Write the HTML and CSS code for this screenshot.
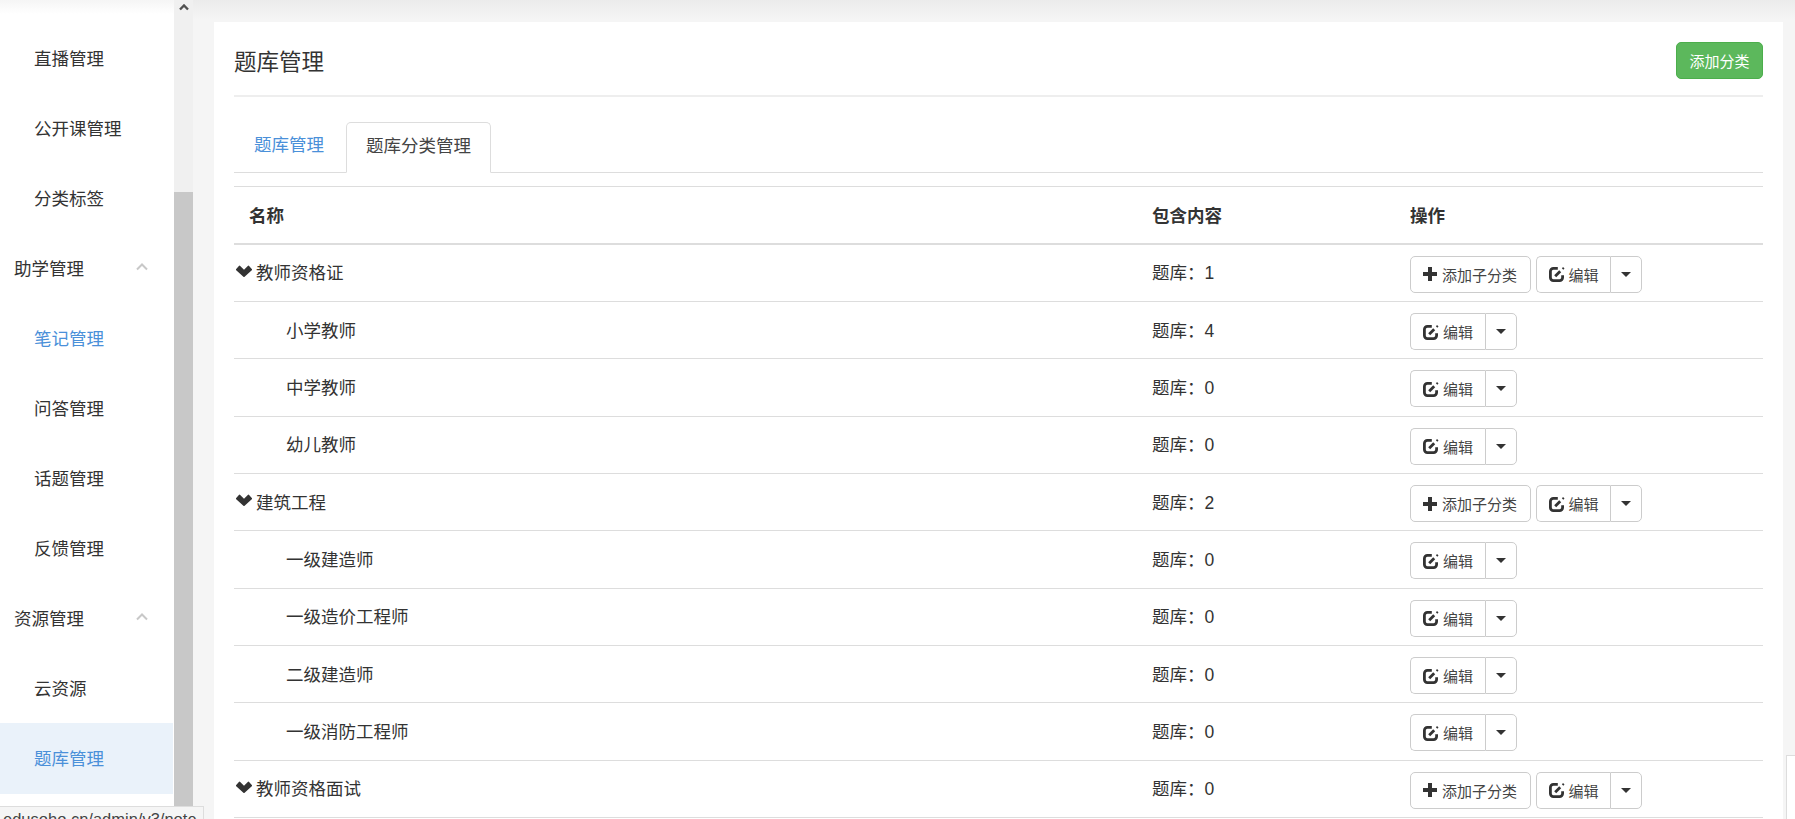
FILE: index.html
```html
<!DOCTYPE html>
<html lang="zh-CN">
<head>
<meta charset="utf-8">
<title>题库管理</title>
<link rel="stylesheet" href="styles.css">
</head>
<body>
<svg class="defs" width="0" height="0" aria-hidden="true">
  <symbol id="i-chev" viewBox="0 0 16 12"><path d="M.2 3.9 2.9.9a.9.9 0 0 1 1.3 0L8 4.7 11.8.9a.9.9 0 0 1 1.3 0l2.7 3a.9.9 0 0 1 0 1.3L8.6 11.7a.9.9 0 0 1-1.2 0L.2 5.2a.9.9 0 0 1 0-1.3z"/></symbol>
  <symbol id="i-plus" viewBox="0 0 14 14"><path d="M5 0h4v5h5v4H9v5H5V9H0V5h5z"/></symbol>
  <symbol id="i-edit" viewBox="0 0 16 16"><path class="stroke" d="M13.6 9.2v2.4a3 3 0 0 1-3 3H4.4a3 3 0 0 1-3-3V5.4a3 3 0 0 1 3-3h4.4"/><path class="stroke" d="M6.2 10.2 11.2 5.2"/><path class="stroke thin" d="M13.6 3l1.2-1.2"/></symbol>
</svg>
<div class="app">
  <aside class="side">
    <nav class="nav">
      <a class="item sub">直播管理</a>
      <a class="item sub">公开课管理</a>
      <a class="item sub">分类标签</a>
      <a class="item group">助学管理<svg class="up" viewBox="0 0 12 8"><path d="M1 6.5 6 1.5l5 5"/></svg></a>
      <a class="item sub link">笔记管理</a>
      <a class="item sub">问答管理</a>
      <a class="item sub">话题管理</a>
      <a class="item sub">反馈管理</a>
      <a class="item group">资源管理<svg class="up" viewBox="0 0 12 8"><path d="M1 6.5 6 1.5l5 5"/></svg></a>
      <a class="item sub">云资源</a>
      <a class="item sub link on">题库管理</a>
    </nav>
  </aside>
  <div class="scrollbar">
    <div class="track"><svg class="sb-arrow" viewBox="0 0 10 7"><path d="M1 5.5 5 1.5l4 4"/></svg></div>
    <div class="thumb"></div>
  </div>
  <main class="main">
    <section class="card">
      <header class="head">
        <h1 class="title">题库管理</h1>
        <button class="add">添加分类</button>
      </header>
      <ul class="tabs">
        <li class="tab link">题库管理</li>
        <li class="tab active">题库分类管理</li>
      </ul>
      <div class="table">
        <div class="row th"><div class="c-name">名称</div><div>包含内容</div><div>操作</div></div>

        <div class="row"><div class="name"><svg class="chev"><use href="#i-chev"/></svg>教师资格证</div><div class="count">题库：1</div><div class="ops"><button class="btn add-child"><svg class="plus"><use href="#i-plus"/></svg>添加子分类</button><span class="split"><button class="btn"><svg class="edit"><use href="#i-edit"/></svg>编辑</button><button class="btn drop"><i class="caret"></i></button></span></div></div>
        <div class="row"><div class="name child">小学教师</div><div class="count">题库：4</div><div class="ops"><span class="split"><button class="btn"><svg class="edit"><use href="#i-edit"/></svg>编辑</button><button class="btn drop"><i class="caret"></i></button></span></div></div>
        <div class="row"><div class="name child">中学教师</div><div class="count">题库：0</div><div class="ops"><span class="split"><button class="btn"><svg class="edit"><use href="#i-edit"/></svg>编辑</button><button class="btn drop"><i class="caret"></i></button></span></div></div>
        <div class="row"><div class="name child">幼儿教师</div><div class="count">题库：0</div><div class="ops"><span class="split"><button class="btn"><svg class="edit"><use href="#i-edit"/></svg>编辑</button><button class="btn drop"><i class="caret"></i></button></span></div></div>
        <div class="row"><div class="name"><svg class="chev"><use href="#i-chev"/></svg>建筑工程</div><div class="count">题库：2</div><div class="ops"><button class="btn add-child"><svg class="plus"><use href="#i-plus"/></svg>添加子分类</button><span class="split"><button class="btn"><svg class="edit"><use href="#i-edit"/></svg>编辑</button><button class="btn drop"><i class="caret"></i></button></span></div></div>
        <div class="row"><div class="name child">一级建造师</div><div class="count">题库：0</div><div class="ops"><span class="split"><button class="btn"><svg class="edit"><use href="#i-edit"/></svg>编辑</button><button class="btn drop"><i class="caret"></i></button></span></div></div>
        <div class="row"><div class="name child">一级造价工程师</div><div class="count">题库：0</div><div class="ops"><span class="split"><button class="btn"><svg class="edit"><use href="#i-edit"/></svg>编辑</button><button class="btn drop"><i class="caret"></i></button></span></div></div>
        <div class="row"><div class="name child">二级建造师</div><div class="count">题库：0</div><div class="ops"><span class="split"><button class="btn"><svg class="edit"><use href="#i-edit"/></svg>编辑</button><button class="btn drop"><i class="caret"></i></button></span></div></div>
        <div class="row"><div class="name child">一级消防工程师</div><div class="count">题库：0</div><div class="ops"><span class="split"><button class="btn"><svg class="edit"><use href="#i-edit"/></svg>编辑</button><button class="btn drop"><i class="caret"></i></button></span></div></div>
        <div class="row"><div class="name"><svg class="chev"><use href="#i-chev"/></svg>教师资格面试</div><div class="count">题库：0</div><div class="ops"><button class="btn add-child"><svg class="plus"><use href="#i-plus"/></svg>添加子分类</button><span class="split"><button class="btn"><svg class="edit"><use href="#i-edit"/></svg>编辑</button><button class="btn drop"><i class="caret"></i></button></span></div></div>
      </div>
    </section>
  </main>
</div>
<div class="status">edusoho.cn/admin/v3/note</div>
<div class="corner"></div>
</body>
</html>
```

FILE: styles.css
```css
* { box-sizing: border-box; }
html, body { margin: 0; height: 100%; overflow: hidden; }
body {
  font-family: "Liberation Sans", "Noto Sans CJK SC", sans-serif;
  font-size: 17.5px;
  color: #333;
  background: #f5f5f5;
}
.defs { position: absolute; }
.app { display: flex; height: 819px; }

.side {
  width: 174px;
  flex: none;
  padding-top: 23px;
  overflow: hidden;
  background: linear-gradient(#f5f5f5, #fff 14px);
}
.nav { display: flex; flex-direction: column; }
.item {
  display: flex;
  align-items: center;
  height: 70.05px;
  padding-bottom: 2px;
  margin-right: 1px;
  color: #333;
}
.sub { padding-left: 34px; }
.group { padding-left: 14px; justify-content: space-between; padding-right: 25px; }
.link { color: #4a90d9; }
.on { background: #eaf2fa; }
.up { width: 12px; height: 8px; }
.up path { fill: none; stroke: #c8c8c8; stroke-width: 2; }

.scrollbar { width: 19px; flex: none; display: flex; flex-direction: column; background: #f0f0f0; }
.track { height: 192px; display: flex; justify-content: center; padding-top: 4px; }
.sb-arrow { width: 10px; height: 7px; }
.sb-arrow path { fill: none; stroke: #505050; stroke-width: 2.4; }
.thumb { flex: 1; background: #c8c8c8; }

.main {
  flex: 1;
  min-width: 0;
  padding: 22px 12px 0 21px;
  background: linear-gradient(#ebebeb, #f5f5f5 20px);
}
.card { background: #fff; padding: 20px 20px 0; height: 797px; overflow: hidden; }

.head {
  display: flex;
  justify-content: space-between;
  align-items: center;
  padding-bottom: 16px;
  border-bottom: 2px solid #eee;
}
.title { margin: 4px 0 0; font-size: 22.5px; font-weight: 400; line-height: 33px; }
.add {
  width: 87px;
  height: 37px;
  padding: 0;
  font: inherit;
  font-size: 15px;
  color: #fff;
  background: #5cb85c;
  border: 1px solid #4cae4c;
  border-radius: 5px;
}

.tabs {
  display: flex;
  gap: 2px;
  list-style: none;
  margin: 25px 0 0;
  padding: 0;
  height: 51px;
  border-bottom: 1px solid #ddd;
}
.tab { height: 51px; padding: 0 20px; line-height: 47px; }
.tab.link { color: #4a90d9; }
.active {
  padding: 0 19px;
  background: #fff;
  border: 1px solid #ddd;
  border-bottom-color: #fff;
  border-radius: 5px 5px 0 0;
  color: #444;
}

.table { margin-top: 13px; border-top: 1px solid #ddd; }
.row {
  display: grid;
  grid-template-columns: 918px 258px 1fr;
  align-items: center;
  height: 57.33px;
  border-bottom: 1px solid #ddd;
}
.th { height: 57.6px; padding-bottom: 1px; font-weight: 700; border-bottom-width: 2px; }
.c-name { padding-left: 15px; }
.name { display: flex; align-items: center; margin-bottom: 2px; }
.count { margin-bottom: 2px; }
.child { padding-left: 52px; }
.chev { width: 16px; height: 12px; margin: 0 4px 2px 2px; fill: #333; }

.ops { display: flex; gap: 5px; margin-top: 3px; }
.split { display: flex; }
.btn {
  display: inline-flex;
  align-items: center;
  height: 37px;
  padding: 0 13px 0 12px;
  font: inherit;
  font-size: 15px;
  color: #444;
  background: #fff;
  border: 1px solid #ccc;
  border-radius: 5px;
}
.add-child { padding-right: 12.6px; }
.split .btn:first-child { padding-right: 11.7px; border-radius: 5px 0 0 5px; border-right: 0; }
.btn.drop { width: 32px; padding: 0; justify-content: center; border-radius: 0 5px 5px 0; }
.plus { width: 14px; height: 14px; margin-right: 5px; fill: #333; }
.edit { width: 16px; height: 16px; margin-right: 4px; }
.stroke { fill: none; stroke: #333; stroke-width: 2.8; }
.thin { stroke-width: 2; }
.caret {
  width: 0;
  height: 0;
  border-left: 5px solid transparent;
  border-right: 5px solid transparent;
  border-top: 5px solid #333;
}

.status {
  position: absolute;
  left: 0;
  bottom: 0;
  width: 204px;
  height: 13px;
  padding-left: 3px;
  overflow: hidden;
  font-size: 16.5px;
  line-height: 24px;
  white-space: nowrap;
  color: #444;
  background: #f5f5f5;
  border-top: 1px solid #ddd;
  border-right: 1px solid #ddd;
}
.corner {
  position: absolute;
  right: 0;
  bottom: 0;
  width: 9px;
  height: 64px;
  background: #fff;
  border-top: 1px solid #ddd;
  border-left: 1px solid #ddd;
}
```
